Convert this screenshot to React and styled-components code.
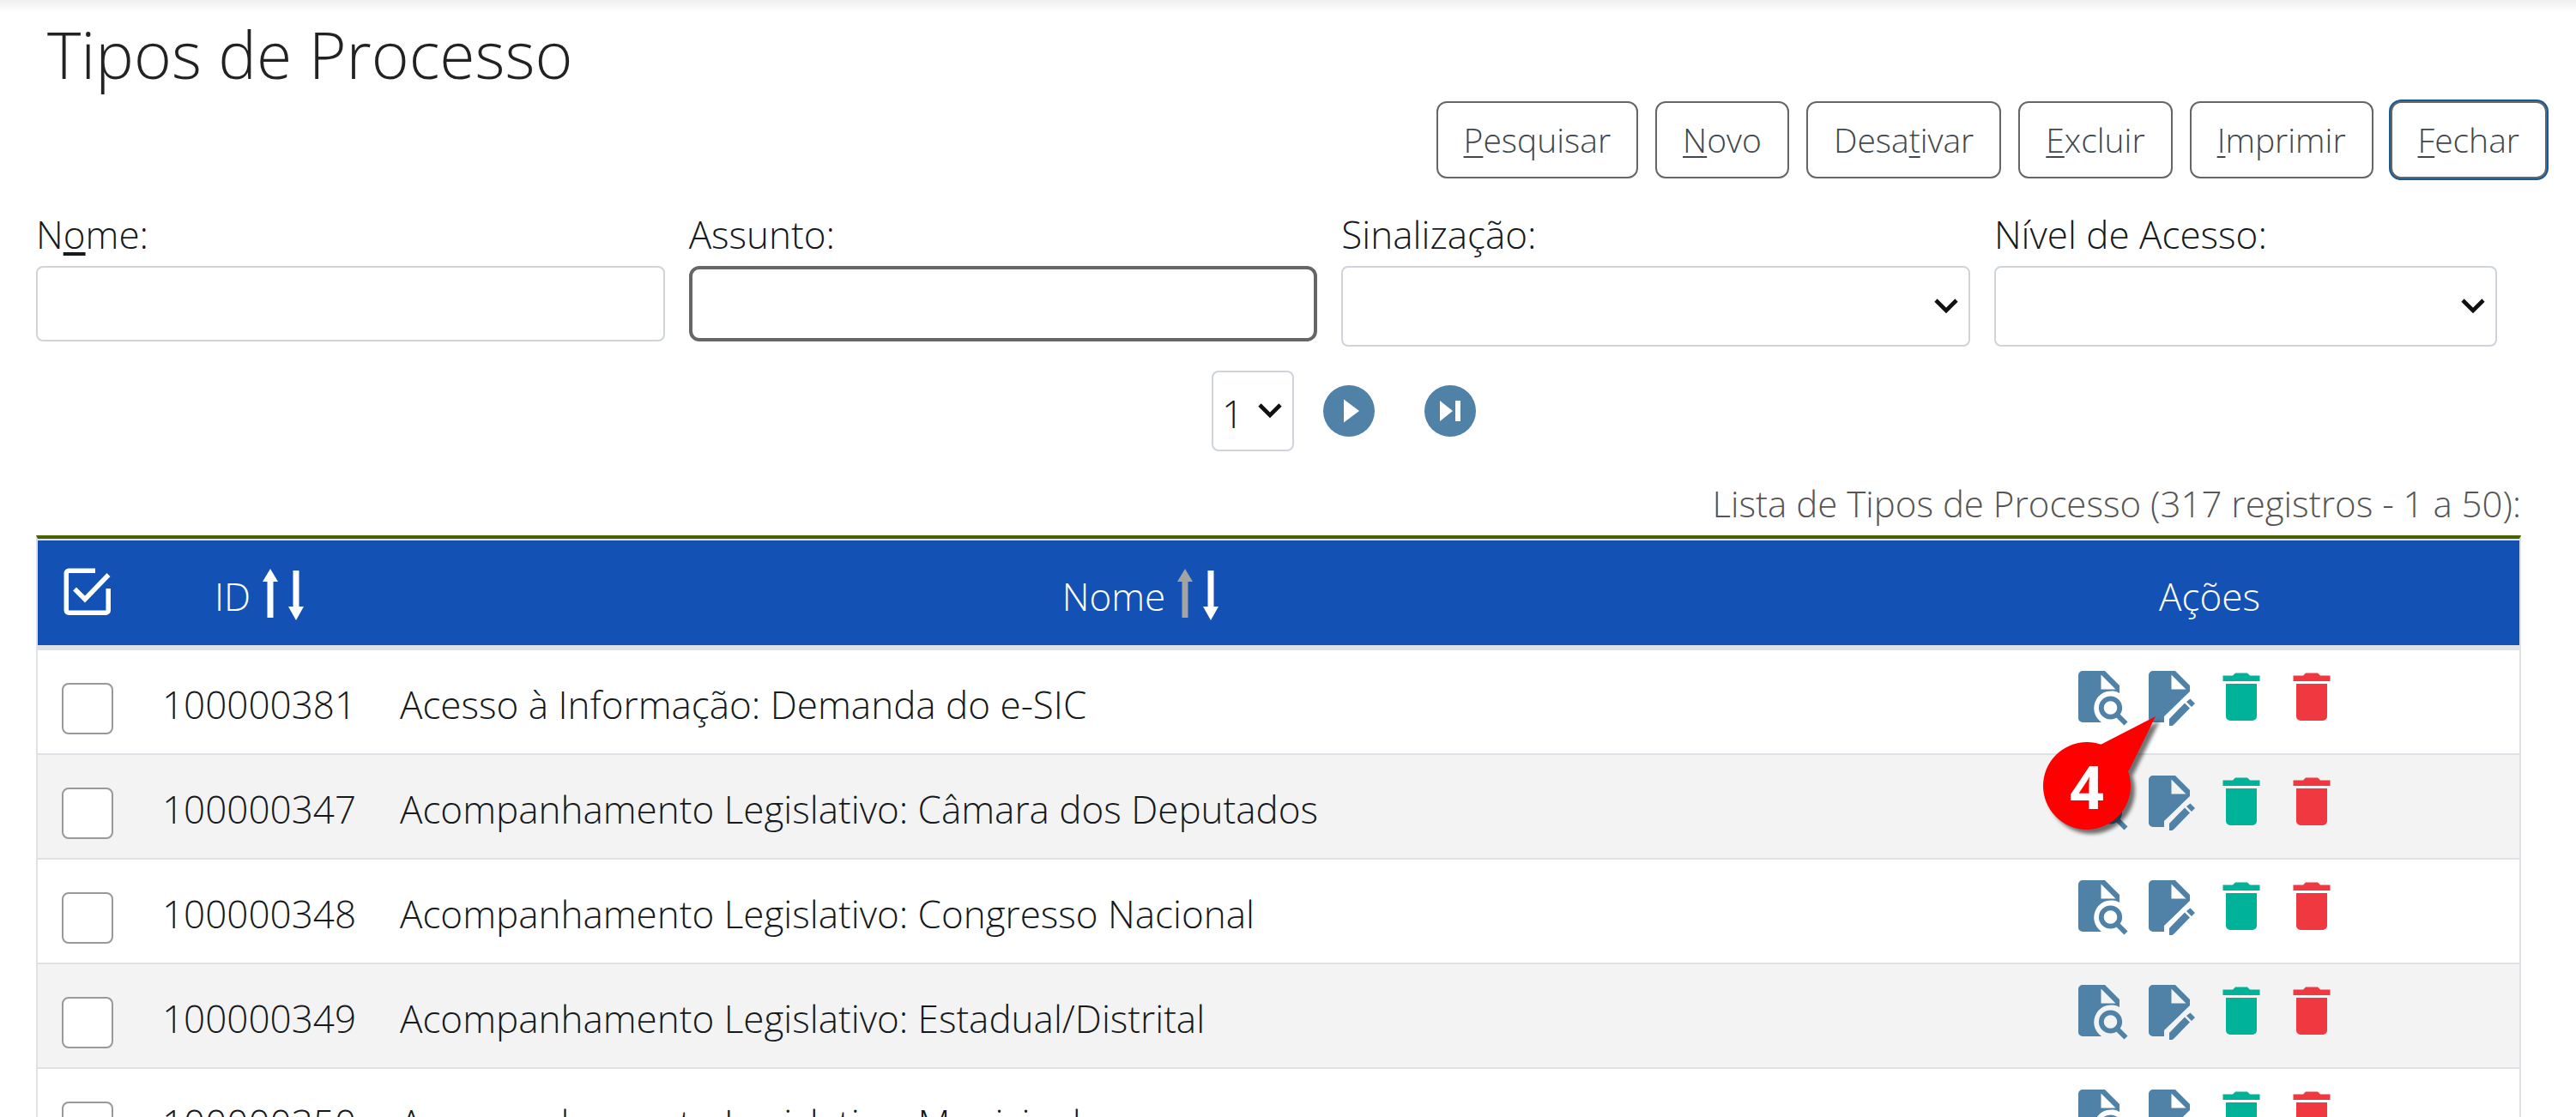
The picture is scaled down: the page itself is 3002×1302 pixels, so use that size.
import React from 'react';
import styled, { createGlobalStyle } from 'styled-components';

const GlobalStyle = createGlobalStyle`
  *, *::before, *::after { box-sizing: border-box; }
  html, body { margin: 0; background: #fff; }
  body, button, input, select {
    font-family: 'Open Sans', sans-serif;
    font-weight: 300;
    color: #16191c;
  }
  body { font-size: 44px; line-height: 50px; overflow-x: hidden; }
`;

const Page = styled.main`
  height: 100vh;
  overflow: hidden;
  padding: 20px 64px 0 42px;
  background: linear-gradient(#efefef, #ffffff 14px);
`;

const Title = styled.h1`
  margin: 0;
  padding-left: 13px;
  font-size: 75px;
  line-height: 86px;
  font-weight: 300;
  color: #222;
`;

const Toolbar = styled.div`
  display: flex;
  justify-content: flex-end;
  gap: 20px;
  margin: 12px -30px 0 0;
`;

const ToolButton = styled.button`
  height: 90px;
  padding: 0 30px;
  border: 2px solid #666;
  border-radius: 12px;
  background: #fff;
  color: #41474d;
  font-size: 39px;
  line-height: 46px;
  white-space: nowrap;
  box-shadow: ${(p) => (p.$active ? '0 0 0 2px #155b99' : 'none')};
`;

const Key = styled.span`
  text-decoration: underline;
  text-decoration-thickness: ${(p) => (p.$thick ? '4px' : '2px')};
  text-underline-offset: 4px;
  text-decoration-skip-ink: none;
`;

const Filters = styled.form`
  display: grid;
  grid-template-columns: 5fr 5fr 5fr 4fr;
  gap: 28px;
  align-items: start;
  padding-right: 28px;
  margin-top: 40px;
`;

const Field = styled.div`
  display: flex;
  flex-direction: column;
  gap: 12px;
`;

const TextInput = styled.input`
  width: 100%;
  height: 88px;
  padding: 0 20px;
  border: ${(p) => (p.$strong ? '4px solid #666' : '2px solid #ced4da')};
  border-radius: ${(p) => (p.$strong ? '12px' : '8px')};
  background: #fff;
  font-size: 44px;
`;

const SelectBox = styled.div`
  display: grid;
  align-items: center;
  width: ${(p) => (p.$compact ? '96px' : '100%')};

  > * { grid-area: 1 / 1; }
  > svg {
    justify-self: end;
    margin-right: 13px;
    pointer-events: none;
  }
`;

const NativeSelect = styled.select`
  appearance: none;
  width: 100%;
  height: 94px;
  padding: 6px 44px 0 10px;
  border: 2px solid #ced4da;
  border-radius: 8px;
  background: #fff;
  font-size: 44px;
  line-height: 50px;
`;

const Pager = styled.nav`
  display: flex;
  align-items: center;
  justify-content: center;
  gap: 34px;
  padding-left: 152px;
  margin: 28px 0 36px;
`;

const PageLinks = styled.div`
  display: flex;
  gap: 58px;
`;

const IconLink = styled.a`
  display: block;
  line-height: 0;
`;

const IconButton = styled.button`
  display: block;
  padding: 0;
  border: 0;
  background: none;
  line-height: 0;
`;

const List = styled.table`
  width: 100%;
  table-layout: fixed;
  border-collapse: separate;
  border-spacing: 0;

  caption {
    padding-bottom: 12px;
    text-align: right;
    font-size: 42px;
    color: #555;
  }
`;

const HeadCell = styled.th`
  width: ${(p) => p.$width || 'auto'};
  height: 134px;
  padding: 0;
  border-top: 4px solid #4a6100;
  border-bottom: 6px solid #dee2e6;
  background: #1351b4;
  box-shadow: inset 0 2px #dee2e6;
  color: #fff;
  font-weight: 300;

  &:first-child { border-left: 2px solid #dee2e6; }
  &:last-child { border-right: 2px solid #dee2e6; }
`;

const HeadContent = styled.div`
  display: flex;
  align-items: center;
  justify-content: center;
  gap: 14px;
`;

const HeadLabel = styled.span`
  padding-top: 10px;
`;

const Sort = styled.span`
  display: flex;
  gap: 12px;
  padding-top: 6px;
`;

const Row = styled.tr`
  background: ${(p) => (p.$alt ? '#f3f3f3' : '#fff')};
`;

const Cell = styled.td`
  height: 122px;
  padding: ${(p) => p.$pad};
  border-bottom: 2px solid #dee2e6;
  text-align: ${(p) => p.$align || 'left'};
  vertical-align: top;
  white-space: nowrap;

  &:first-child { border-left: 2px solid #dee2e6; }
  &:last-child { border-right: 2px solid #dee2e6; }
`;

const Check = styled.input`
  appearance: none;
  display: block;
  width: 60px;
  height: 60px;
  margin: 0 auto;
  border: 2px solid #999;
  border-radius: 8px;
  background: #fff;
`;

const Actions = styled.div`
  display: flex;
  gap: 22px;
  width: 306px;
  margin: 0 auto;
`;

const CalloutAnchor = styled.div`
  position: relative;
  z-index: 1;
  width: 0;
  margin-left: -22px;
`;

const Callout = styled.div`
  position: absolute;
  right: 206px;
  top: 44px;
  width: 160px;
  height: 160px;

  svg { display: block; filter: drop-shadow(5px 5px 2px rgba(0, 0, 0, 0.55)); }
`;

const CalloutNumber = styled.span`
  position: absolute;
  left: 19px;
  top: 39px;
  width: 102px;
  height: 102px;
  text-align: center;
  font: 700 70px/102px 'Open Sans', sans-serif;
  color: #fff;
`;

const BLUE = '#5081a6';

const Chevron = () => (
  <svg width="30" height="20" viewBox="0 0 30 20" aria-hidden="true">
    <path d="M3 3 15 15 27 3" fill="none" stroke="#111" strokeWidth="4.6" />
  </svg>
);

const NextIcon = () => (
  <svg width="60" height="60" viewBox="0 0 60 60" aria-hidden="true">
    <circle cx="30" cy="30" r="30" fill={BLUE} />
    <path d="M24 16.500 42 30 24 43.500Z" fill="#fff" />
  </svg>
);

const LastIcon = () => (
  <svg width="60" height="60" viewBox="0 0 60 60" aria-hidden="true">
    <circle cx="30" cy="30" r="30" fill={BLUE} />
    <path d="M18 18 33 30 18 42ZM36 18h6v24h-6Z" fill="#fff" />
  </svg>
);

const CheckAllIcon = () => (
  <svg width="56" height="56" viewBox="0 0 56 56" fill="none" stroke="#fff" strokeWidth="5.500" aria-hidden="true">
    <path d="M37 3.300H6a2.700 2.700 0 0 0-2.700 2.700v43.500a2.700 2.700 0 0 0 2.700 2.700h43.500a2.700 2.700 0 0 0 2.700-2.700V24" />
    <path d="M13 24.500 25 36.500 52.500 8" />
  </svg>
);

const ArrowIcon = ({ down, color = '#fff' }) => (
  <svg width="18" height="60" viewBox="0 0 18 60" aria-hidden="true">
    <path
      d={down ? 'M5.500 2h7v42H18L9 60 0 44h5.500Z' : 'M5.500 57h7V15H18L9 0 0 15h5.500Z'}
      fill={color}
    />
  </svg>
);

const ViewIcon = () => (
  <svg width="60" height="66" viewBox="0 0 60 66" fill={BLUE} aria-hidden="true">
    <path
      fillRule="evenodd"
      d="M5 0H31L48 17V26A20 20 0 0 0 27 60H5a5 5 0 0 1-5-5V5a5 5 0 0 1 5-5ZM26.500 4.500V21.500H43.500Z"
    />
    <circle cx="37.500" cy="43" r="10.700" fill="none" stroke={BLUE} strokeWidth="5.800" />
    <path d="M45 51 55.500 61.500" stroke={BLUE} strokeWidth="5.800" />
  </svg>
);

const EditIcon = () => (
  <svg width="60" height="66" viewBox="0 0 60 66" fill={BLUE} aria-hidden="true">
    <path
      fillRule="evenodd"
      d="M5 0H31L48 17V24L18 53V60H5a5 5 0 0 1-5-5V5a5 5 0 0 1 5-5ZM26.500 4.500V21.500H43.500Z"
    />
    <path d="M24 64V56L42 37.500 48 43.500 30 62 27.500 64ZM44 36 48.500 32.500 54 38 50 42Z" />
  </svg>
);

const TrashIcon = ({ color }) => (
  <svg width="60" height="66" viewBox="0 0 60 66" fill={color} aria-hidden="true">
    <path d="M4.500 5.500H16L19 2.500H33L36 5.500H47.500V12H4.500ZM8 15H44V53a5 5 0 0 1-5 5H13a5 5 0 0 1-5-5Z" />
  </svg>
);

const BUTTONS = [
  ['', 'P', 'esquisar'],
  ['', 'N', 'ovo'],
  ['Desa', 't', 'ivar'],
  ['', 'E', 'xcluir'],
  ['', 'I', 'mprimir'],
  ['', 'F', 'echar'],
];

const TYPES = [
  ['100000381', 'Acesso à Informação: Demanda do e-SIC'],
  ['100000347', 'Acompanhamento Legislativo: Câmara dos Deputados'],
  ['100000348', 'Acompanhamento Legislativo: Congresso Nacional'],
  ['100000349', 'Acompanhamento Legislativo: Estadual/Distrital'],
  ['100000350', 'Acompanhamento Legislativo: Municipal'],
];

export default function App() {
  return (
    <>
      <GlobalStyle />
      <Page>
        <Title>Tipos de Processo</Title>
        <Toolbar>
          {BUTTONS.map(([before, key, after]) => (
            <ToolButton key={key} type="button" $active={key === 'F'}>
              {before}
              <Key>{key}</Key>
              {after}
            </ToolButton>
          ))}
        </Toolbar>

        <Filters>
          <Field>
            <label htmlFor="nome">
              N<Key $thick>o</Key>me:
            </label>
            <TextInput id="nome" type="text" />
          </Field>
          <Field>
            <label htmlFor="assunto">Assunto:</label>
            <TextInput id="assunto" type="text" $strong />
          </Field>
          <Field>
            <label htmlFor="sinalizacao">Sinalização:</label>
            <SelectBox>
              <NativeSelect id="sinalizacao">
                <option value="" />
              </NativeSelect>
              <Chevron />
            </SelectBox>
          </Field>
          <Field>
            <label htmlFor="nivel">Nível de Acesso:</label>
            <SelectBox>
              <NativeSelect id="nivel">
                <option value="" />
              </NativeSelect>
              <Chevron />
            </SelectBox>
          </Field>
        </Filters>

        <Pager aria-label="Paginação">
          <SelectBox $compact>
            <NativeSelect aria-label="Página">
              <option>1</option>
            </NativeSelect>
            <Chevron />
          </SelectBox>
          <PageLinks>
            <IconLink href="#proxima" aria-label="Próxima página">
              <NextIcon />
            </IconLink>
            <IconLink href="#ultima" aria-label="Última página">
              <LastIcon />
            </IconLink>
          </PageLinks>
        </Pager>

        <List>
          <caption>Lista de Tipos de Processo (317 registros - 1 a 50):</caption>
          <thead>
            <tr>
              <HeadCell $width="118px" scope="col">
                <HeadContent>
                  <IconButton type="button" aria-label="Selecionar tudo">
                    <CheckAllIcon />
                  </IconButton>
                </HeadContent>
              </HeadCell>
              <HeadCell $width="284px" scope="col">
                <HeadContent>
                  <HeadLabel>ID</HeadLabel>
                  <Sort>
                    <ArrowIcon />
                    <ArrowIcon down />
                  </Sort>
                </HeadContent>
              </HeadCell>
              <HeadCell scope="col">
                <HeadContent>
                  <HeadLabel>Nome</HeadLabel>
                  <Sort>
                    <ArrowIcon color="#a3a3a3" />
                    <ArrowIcon down />
                  </Sort>
                </HeadContent>
              </HeadCell>
              <HeadCell $width="25%" scope="col">
                <HeadContent>
                  <HeadLabel>Ações</HeadLabel>
                </HeadContent>
              </HeadCell>
            </tr>
          </thead>
          <tbody>
            {TYPES.map(([id, name], i) => (
              <Row key={id} $alt={i % 2 === 1}>
                <Cell $pad="38px 0 0">
                  <Check type="checkbox" aria-label={`Selecionar ${name}`} />
                </Cell>
                <Cell $pad="38px 0 0" $align="center">{id}</Cell>
                <Cell $pad="38px 22px 0">{name}</Cell>
                <Cell $pad="24px 0 0">
                  <Actions>
                    <IconButton type="button" aria-label="Consultar"><ViewIcon /></IconButton>
                    <IconButton type="button" aria-label="Alterar"><EditIcon /></IconButton>
                    <IconButton type="button" aria-label="Desativar"><TrashIcon color="#00b398" /></IconButton>
                    <IconButton type="button" aria-label="Excluir"><TrashIcon color="#ef383f" /></IconButton>
                    {i === 0 && (
                      <CalloutAnchor>
                        <Callout>
                          <svg width="160" height="160" viewBox="0 0 160 160" fill="red" aria-hidden="true">
                            <path d="M86 42 150 9 119 72 70 90Z" />
                            <circle cx="70" cy="90" r="51" />
                          </svg>
                          <CalloutNumber>4</CalloutNumber>
                        </Callout>
                      </CalloutAnchor>
                    )}
                  </Actions>
                </Cell>
              </Row>
            ))}
          </tbody>
        </List>
      </Page>
    </>
  );
}
